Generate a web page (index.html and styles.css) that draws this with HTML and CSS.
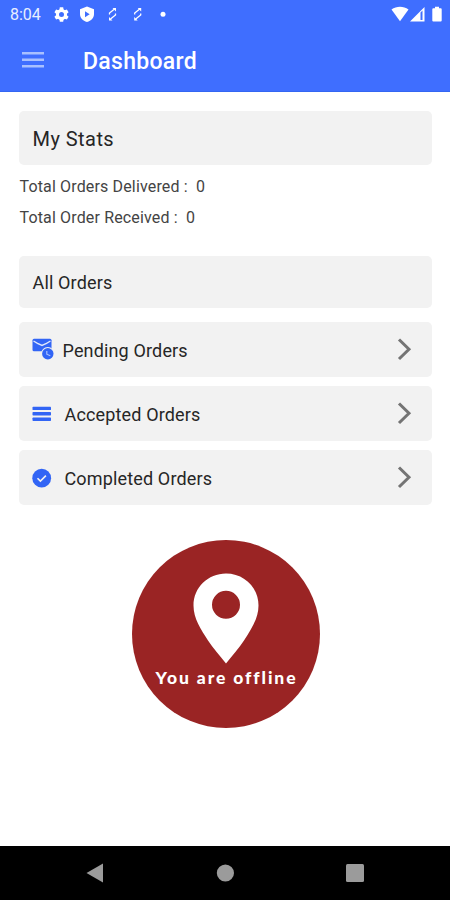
FILE: index.html
```html
<!DOCTYPE html>
<html lang="en">
<head>
<meta charset="utf-8">
<title>Dashboard</title>
<link rel="stylesheet" href="styles.css">
</head>
<body>
<div class="screen">
  <header class="header">
    <div class="status">
      <span class="time">8:04</span>
      <svg class="status-left" width="120" height="20" viewBox="50 5 120 20" fill="#fff">
        <g transform="translate(61.5 14.5)">
          <circle r="4" fill="none" stroke="#fff" stroke-width="3"/>
          <path id="tooth" d="M-1.700-7.200h3.400l.5 3.200h-4.400zM-1.700 7.200h3.400l.5-3.200h-4.400z"/>
          <use href="#tooth" transform="rotate(60)"/>
          <use href="#tooth" transform="rotate(120)"/>
        </g>
        <path fill-rule="evenodd" d="M87 6.500l7 2.700v5c0 3.700-2.800 6.500-7 7.800-4.200-1.300-7-4.100-7-7.800v-5zM85 11.300v6l4.700-3z"/>
        <g id="sync" fill="none" stroke="#fff" stroke-width="1.300">
          <path d="M109.500 14.500v-1.500l5-4M115.500 13.500v1.500l-5 4"/>
          <path d="M112.500 8h3.500v3.500zM112.500 20.500h-3.500v-3.500z" fill="#fff" stroke="none"/>
        </g>
        <use href="#sync" x="25.200"/>
        <circle cx="163" cy="14.300" r="2.500"/>
      </svg>
      <svg class="status-right" width="54" height="20" viewBox="390 5 54 20" fill="#fff">
        <path d="M391.500 9.500c5-3.700 12-3.700 17 0L400 21.200z"/>
        <path fill-rule="evenodd" d="M410 21.500L424.500 7v14.500zM420.500 12.500v7.500h2v-9.500z"/>
        <path d="M433.300 8.300h1.700V6.700h4v1.600h1.700q1 0 1 1V20.500q0 1-1 1h-7.400q-1 0-1-1V9.300q0-1 1-1z"/>
      </svg>
    </div>
    <div class="appbar">
      <svg class="menu" width="22" height="16" viewBox="0 0 22 16">
        <path d="M0 0h22v2.500H0zM0 6.500h22V9H0zM0 13h22v2.500H0z"/>
      </svg>
      <h1>Dashboard</h1>
    </div>
  </header>
  <main class="content">
    <h2 class="card stats-title">My Stats</h2>
    <div class="totals">
      <p class="total">Total Orders Delivered : &nbsp;0</p>
      <p class="total">Total Order Received : &nbsp;0</p>
    </div>
    <h2 class="card all-title">All Orders</h2>
    <nav class="orders">
      <a class="card order">
        <svg class="icon" width="24" height="24" viewBox="0 0 24 24">
          <rect x=".500" y=".700" width="19" height="12.500" rx="1.500" fill="#3265f5"/>
          <path d="M1.500 3l4 2.300 4.500 2.200 4.500-2.200 4-2.300" fill="none" stroke="#dfe6fb" stroke-width="1.400"/>
          <circle cx="15.800" cy="15.700" r="6.700" fill="#f2f2f2"/>
          <circle cx="15.800" cy="15.700" r="5.700" fill="#3265f5"/>
          <path d="M14.800 13v3.200l3.500 1.500" fill="none" stroke="#a9bffd" stroke-width="1.200"/>
        </svg>
        <span class="label pending">Pending Orders</span>
        <svg class="chevron" width="16" height="24" viewBox="0 0 16 24"><path d="M2 2l10 10L2 22"/></svg>
      </a>
      <a class="card order">
        <svg class="icon" width="24" height="24" viewBox="0 0 24 24" fill="#3265f5">
          <rect x=".500" y="4.700" width="18.500" height="3.400" rx=".7"/><rect x=".500" y="10.100" width="18.500" height="3.400" rx=".7"/><rect x=".500" y="15.500" width="18.500" height="3.400" rx=".7"/>
        </svg>
        <span class="label">Accepted Orders</span>
        <svg class="chevron" width="16" height="24" viewBox="0 0 16 24"><path d="M2 2l10 10L2 22"/></svg>
      </a>
      <a class="card order">
        <svg class="icon" width="24" height="24" viewBox="0 0 24 24">
          <circle cx="9.700" cy="12.200" r="9.400" fill="#3265f5"/>
          <path d="M5.500 12.200l2.900 2.900 5.500-5.500" fill="none" stroke="#f2f2f2" stroke-width="1.600"/>
        </svg>
        <span class="label">Completed Orders</span>
        <svg class="chevron" width="16" height="24" viewBox="0 0 16 24"><path d="M2 2l10 10L2 22"/></svg>
      </a>
    </nav>
    <div class="offline">
      <svg width="66" height="91" viewBox="0 0 66 91">
        <path fill="#fff" fill-rule="evenodd" d="M33 .500C15 .500.500 14.500.500 32.500c0 13 7.500 24 14.500 35C20 75 27 83 33 90.500 39 83 46 75 51 67.500c7-11 14.500-22 14.500-35C65.500 14.500 51 .500 33 .500zM33 17.800a14 14 0 1 1 0 28 14 14 0 0 1 0-28z"/>
      </svg>
      <span class="offline-text">You are offline</span>
    </div>
  </main>
  <footer class="navbar">
    <svg width="18" height="20" viewBox="0 0 18 20"><path d="M.500 10L17 .500v19z"/></svg>
    <svg width="18" height="18" viewBox="0 0 18 18"><circle cx="9.400" cy="9" r="8.600"/></svg>
    <svg width="18" height="18" viewBox="0 0 18 18"><rect width="18" height="18" rx="1.500"/></svg>
  </footer>
</div>
</body>
</html>
```

FILE: styles.css
```css
* { box-sizing: border-box; margin: 0; }
body { background: #fff; font-family: Roboto, sans-serif; color: #262626; }
svg { display: block; flex: none; }
.screen { width: 450px; height: 900px; display: flex; flex-direction: column; overflow: hidden; }

.header { height: 92px; flex: none; background: #3f6eff; border-bottom: 1px solid #3466f2; color: #fff; }
.status { height: 30px; display: flex; padding: 5px 6px 0 10px; }
.time { width: 40px; font-size: 16px; line-height: 20px; color: #e8eeff; }
.status-right { margin-left: auto; }
.appbar { height: 61px; display: flex; align-items: center; padding-left: 22px; gap: 39px; }
.menu { fill: #a9c0ff; margin-bottom: 2px; }
.appbar h1 { font-size: 23px; font-weight: 500; line-height: 28px; padding-top: 2px; letter-spacing: .3px; }

.content { flex: 1; padding: 18.500px 18px 0 19px; }
.card { background: #f2f2f2; border-radius: 5px; display: flex; align-items: center; padding-left: 13.500px; font-weight: 400; }
.stats-title { height: 54.500px; font-size: 20px; padding-top: 2px; letter-spacing: .45px; }
.totals { padding-top: 6px; height: 91px; }
.total { font-size: 16px; line-height: 31px; color: #444; padding-left: .5px; letter-spacing: .15px; }
.all-title { height: 52px; font-size: 18px; padding-top: 1px; letter-spacing: .15px; }
.orders { display: grid; gap: 9px; margin-top: 13.500px; }
.order { height: 55.200px; font-size: 18px; padding-right: 19px; letter-spacing: .15px; }
.icon { margin: 1.500px 8px 0 -.5px; }
.label { padding-top: 2px; margin-left: .5px; }
.label.pending { margin-left: -1.500px; }
.chevron { margin: 0 0 0 auto; fill: none; stroke: #747474; stroke-width: 3; }
.chevron path { transform: translateY(.5px) scaleY(.98); }

.offline { width: 188px; height: 188px; margin: 34.500px auto 0; border-radius: 50%; background: #9a2424; display: flex; flex-direction: column; align-items: center; padding-top: 33px; }
.offline-text { color: #fff; font: 900 17.500px/24px Lato, sans-serif; letter-spacing: 1.900px; margin: 2px 0 0 2px; white-space: nowrap; }

.navbar { height: 54px; flex: none; background: #000; display: flex; align-items: center; justify-content: space-between; padding: 0 86px; fill: #9b9b9b; }
```
